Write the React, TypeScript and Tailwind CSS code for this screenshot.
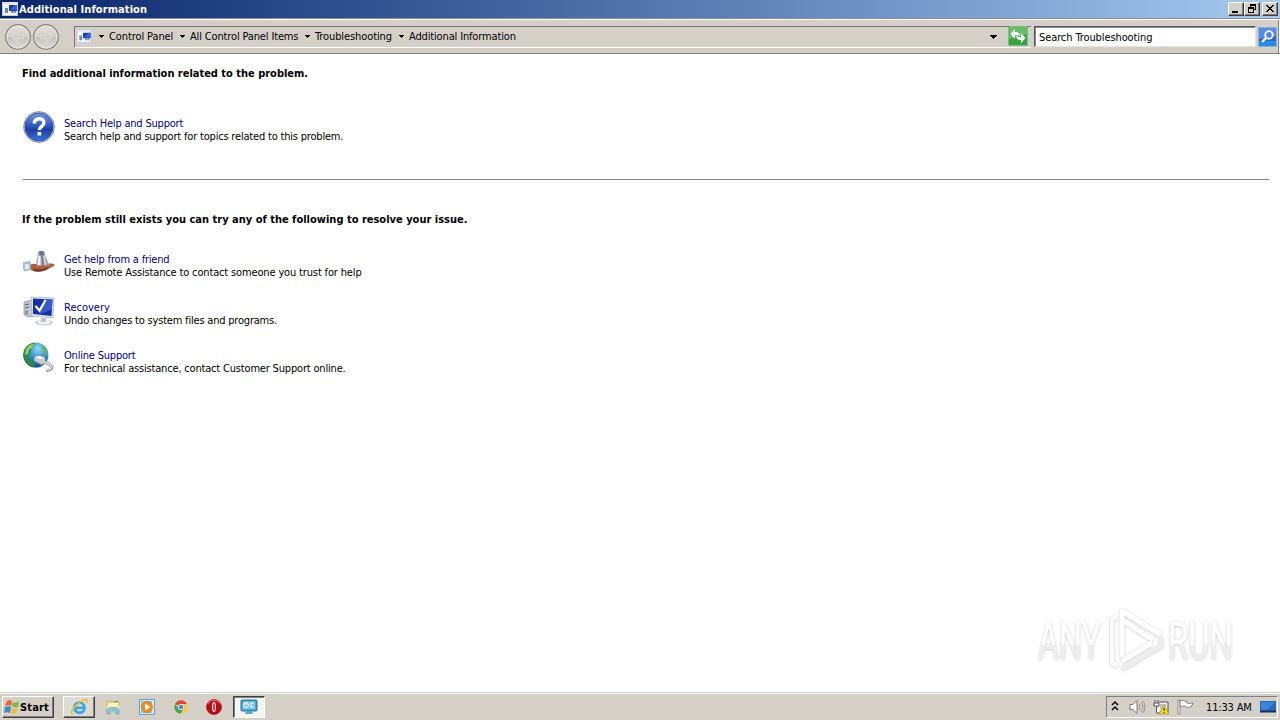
import type { ReactNode } from "react";

const raised = "border border-t-white border-l-white border-r-[#404040] border-b-[#404040] shadow-[inset_-1px_-1px_0_#808080]";

function PanelIcon({ className }: { className: string }) {
  return (
    <svg viewBox="0 0 16 14" className={className}>
      <rect x="0.5" y="0.5" width="15" height="13" fill="#f4f7fc" stroke="#c3cad8" />
      <rect x="0" y="0" width="16" height="2" fill="#dfe4ee" />
      <rect x="7" y="3" width="8" height="6" fill="#1838b0" />
      <path d="M8 8l5-5h2v5z" fill="#3763d8" />
      <rect x="9" y="9" width="5" height="2" fill="#8795b6" />
      <rect x="3" y="6" width="3" height="5" fill="#7187ae" />
      <rect x="4" y="7" width="1" height="1" fill="#43b05c" />
    </svg>
  );
}

function NavButton({ back }: { back?: boolean }) {
  return (
    <svg viewBox="0 0 28 28" className="h-7 w-7 shrink-0">
      <defs>
        <linearGradient id={back ? "nb" : "nf"} x1="0" y1="0" x2="0" y2="1">
          <stop offset="0" stopColor="#e2e0dd" />
          <stop offset="0.48" stopColor="#d3d0cc" />
          <stop offset="0.52" stopColor="#c5c2be" />
          <stop offset="1" stopColor="#e0deda" />
        </linearGradient>
      </defs>
      <circle cx="14" cy="14" r="12.3" fill={back ? "url(#nb)" : "url(#nf)"} stroke="#85827e" strokeWidth="1.2" />
      <circle cx="14" cy="14" r="11" fill="none" stroke="#e9e7e3" strokeWidth="0.9" />
      <path
        d={back ? "M13.5 8.500l-5.500 5.500 5.500 5.500v-4h6v-3h-6z" : "M14.500 8.500l5.500 5.500-5.500 5.500v-4h-6v-3h6z"}
        fill="#d2cfca"
        stroke="#dfdcd8"
        strokeWidth="0.8"
      />
    </svg>
  );
}

function Caret({ className }: { className: string }) {
  return (
    <svg viewBox="0 0 7 4" className={className} shapeRendering="crispEdges">
      <path d="M0 0h7L3.5 4z" fill="#000" />
    </svg>
  );
}

function Crumb({ label, width, tracking }: { label: string; width: string; tracking: string }) {
  return (
    <div className={`flex shrink-0 items-center ${width}`}>
      <Caret className="mr-[5px] h-[3px] w-[5px]" />
      <span className={`whitespace-nowrap ${tracking}`}>{label}</span>
    </div>
  );
}

function HelpIcon() {
  return (
    <svg viewBox="0 0 32 34" className="h-[34px] w-8">
      <defs>
        <linearGradient id="help" x1="0" y1="0" x2="0" y2="1">
          <stop offset="0" stopColor="#7897dd" />
          <stop offset="0.45" stopColor="#3258bd" />
          <stop offset="0.6" stopColor="#1c3ea6" />
          <stop offset="1" stopColor="#3b76dc" />
        </linearGradient>
      </defs>
      <circle cx="16" cy="17" r="15.4" fill="#d3dae8" stroke="#8290ad" strokeWidth="1" />
      <circle cx="16" cy="17" r="14" fill="url(#help)" stroke="#203b8f" strokeWidth="0.8" />
      <path d="M11.3 13.4c0-6.500 9.6-6 9.6-.6 0 3.900-4.600 3.400-4.600 7.500" fill="none" stroke="#fff" strokeWidth="3.500" />
      <rect x="14.4" y="22" width="3.8" height="3.600" rx="0.6" fill="#fff" />
    </svg>
  );
}

function FriendIcon() {
  return (
    <svg viewBox="0 0 32 32" className="h-8 w-8">
      <path d="M7 17c3-2 6-1 9 0 5-1 10-2 15-1 2 1-1 3-4 4-4 3-10 4-15 3l-5-1z" fill="#a85f3e" />
      <path d="M10 21c5 1 12 0 16-2l-3 3c-5 2-9 2-13 1z" fill="#713621" />
      <path d="M13 18c4-1 9-1 14-1" stroke="#d59a79" fill="none" />
      <path d="M0 14.500l7-1 1 8-7 1.500z" fill="#a9c6d5" stroke="#8aa6b5" strokeWidth="0.6" />
      <path d="M2 16h4v5H2z" fill="#d8ebf4" />
      <path d="M14.500 5l1.500-2h5l1 2c-1 3 3 7 3 10-1 3-11 3-12 0 0-3 3-7 1.500-10z" fill="#9fa8b8" />
      <circle cx="18.500" cy="5" r="2.300" fill="#677386" />
      <path d="M15.500 8h2v9h-3z" fill="#f3f6fa" />
      <path d="M19 7l1 11" stroke="#65738b" strokeWidth="1.200" />
      <path d="M21 8l1.500 9" stroke="#dce3ee" strokeWidth="1.200" />
    </svg>
  );
}

function RecoveryIcon() {
  return (
    <svg viewBox="0 0 32 32" className="h-8 w-8">
      <ellipse cx="21" cy="26.500" rx="9" ry="3" fill="#d0d3d8" />
      <ellipse cx="21" cy="26" rx="6.500" ry="2" fill="#f2f3f5" />
      <path d="M1 6l7-2 3 16-6 1-4-2z" fill="#c3c7cd" stroke="#8d949e" strokeWidth="0.7" />
      <path d="M2 9l4-1M2 12l4-1" stroke="#555e6b" />
      <path d="M2 15l3-1v5l-3-1z" fill="#8c949f" />
      <path d="M8 1l23 1-1 20-21-2z" fill="#e1e5ec" stroke="#a8b0bd" strokeWidth="0.7" />
      <path d="M10 2.500l19.500 1-1 16.500-18.500-2z" fill="#1731a4" />
      <path d="M21 3l8.500 .5-.7 10L16 18.500z" fill="#3f62cf" opacity=".85" />
      <path d="M12.500 10l4 4.500L22.500 4" fill="none" stroke="#fff" strokeWidth="2.200" />
      <path d="M18 22h5v4h-5z" fill="#bfc4cc" />
    </svg>
  );
}

function OnlineIcon() {
  return (
    <svg viewBox="0 0 32 32" className="h-8 w-8">
      <defs>
        <radialGradient id="globe" cx=".6" cy=".25" r=".85">
          <stop offset="0" stopColor="#8fdcf5" />
          <stop offset=".5" stopColor="#2d8bd0" />
          <stop offset="1" stopColor="#083b7d" />
        </radialGradient>
      </defs>
      <circle cx="12.800" cy="13" r="12.600" fill="url(#globe)" />
      <path d="M2 7C5 2 9 .5 12 1l-2 4-2 3-1 4-2 1 2 5 5 3-1 4C4 24-1 16 1 10z" fill="#2f8a3d" />
      <path d="M3 7c2-3 4-5 8-5l-2 4-3 2-1 4-3 1z" fill="#8fd066" />
      <path d="M19 3c4 3 6 6 6 11l-3-2-1-4-3-2z" fill="#5bb957" />
      <path d="M11 15l5-2 6 2 1 5-4 3-8-4z" fill="#c7ccd2" stroke="#737d8a" strokeWidth=".8" />
      <path d="M12 15l4-1 5 2-4 1z" fill="#fff" />
      <path d="M21 20c3 1 7 3 8 5.500 0 2-3 2.500-6 3" stroke="#8b949f" strokeWidth="3" fill="none" />
      <path d="M21 20c3 1 7 3 7.500 5 0 2-3 2.500-5.500 3" stroke="#e4e8ec" strokeWidth="1.400" fill="none" />
    </svg>
  );
}

function Item({ icon, title, text, tt, bt }: { icon: ReactNode; title: string; text: string; tt: string; bt: string }) {
  return (
    <div className="flex h-12 shrink-0 items-start">
      <div className="w-[42px] shrink-0">{icon}</div>
      <div className="pt-[9px] leading-[13px]">
        <div className={`whitespace-nowrap text-[#000080] ${tt}`}>{title}</div>
        <div className={`whitespace-nowrap ${bt}`}>{text}</div>
      </div>
    </div>
  );
}

function WindowButton({ children }: { children: ReactNode }) {
  return (
    <div className={`h-[14px] w-4 bg-[#d4d0c8] ${raised}`}>
      <svg viewBox="0 0 14 12" className="h-3 w-[14px]" shapeRendering="crispEdges">{children}</svg>
    </div>
  );
}

function Watermark() {
  return (
    <svg viewBox="0 0 230 80" className="absolute top-[600px] left-[1020px] h-20 w-[230px] overflow-visible">
      <defs>
        <filter id="glow" x="-10%" y="-20%" width="120%" height="140%">
          <feDropShadow dx="0" dy="0.5" stdDeviation="1.800" floodColor="#777" floodOpacity=".42" />
        </filter>
        <linearGradient id="fade" x1="0" y1="0" x2="0" y2="1">
          <stop offset=".54" stopColor="#fff" />
          <stop offset=".57" stopColor="#eeeeee" />
        </linearGradient>
      </defs>
      <g filter="url(#glow)" fill="url(#fade)">
        <text x="18" y="59" textLength="63" lengthAdjust="spacingAndGlyphs" fontFamily="Roboto, sans-serif" fontWeight="400" fontSize="52">ANY</text>
        <text x="148" y="59" textLength="65" lengthAdjust="spacingAndGlyphs" fontFamily="Roboto, sans-serif" fontWeight="400" fontSize="52">RUN</text>
        <g fill="none" strokeLinejoin="round">
          <path d="M97 17l-5 2v44l6 3" stroke="#fafafa" strokeWidth="4" />
          <path d="M102 57V11l39 24M102 20l31 20M102 61l30-18" stroke="#fdfdfd" strokeWidth="4.500" />
          <path d="M102 69l39-23v-8" stroke="#ededed" strokeWidth="4" />
        </g>
      </g>
    </svg>
  );
}

function IeIcon() {
  return (
    <svg viewBox="0 0 18 18" className="h-[18px] w-[18px]">
      <path d="M14.500 11.500c-2 5-10 4-10-2 0-6.500 10-6.500 10 .3H6" fill="none" stroke="#3ca5e3" strokeWidth="2.800" />
      <path d="M3 16c-4 0 1-8 6-11 3-2.500 8-5 8-2.500 0 1-.5 2-1 2.500" fill="none" stroke="#eeb931" strokeWidth="1.500" />
    </svg>
  );
}

function ExplorerIcon() {
  return (
    <svg viewBox="0 0 18 18" className="h-[18px] w-[18px]">
      <path d="M3 3h5l1 1h6v10H2z" fill="#edcd69" stroke="#d3ae50" strokeWidth=".6" />
      <path d="M4 5h10v3H4z" fill="#fff8d7" />
      <path d="M10 3h4v1h-4z" fill="#51ae64" />
      <path d="M2 8h14l-1 6H3z" fill="#f6e39b" />
      <path d="M3 16v-4c0-3 12-3 12 0v4h-3v-3H6v3z" fill="#83c9e8" stroke="#559fbe" strokeWidth=".6" />
    </svg>
  );
}

function PlayerIcon() {
  return (
    <svg viewBox="0 0 16 16" className="h-4 w-4">
      <rect x=".5" y=".5" width="15" height="15" fill="#d1e8f7" stroke="#6ba1c7" />
      <rect x="2" y="2" width="11" height="12" fill="#8bc2e4" />
      <circle cx="8" cy="8" r="5.500" fill="#f58a14" stroke="#dc6e08" strokeWidth=".6" />
      <path d="M6 4.500L11.500 8 6 11.500z" fill="#fff" />
    </svg>
  );
}

function ChromeIcon() {
  return (
    <svg viewBox="0 0 16 16" className="h-[14px] w-[14px]">
      <circle cx="8" cy="8" r="7.500" fill="#f8ca3d" />
      <path d="M8 8L1.300 4.500A7.500 7.500 0 0 1 14.700 4.500H8z" fill="#df4937" />
      <path d="M1.300 4.500A7.500 7.500 0 0 0 7.500 15.500L11 9.500 5 9.500z" fill="#3ca557" />
      <circle cx="8" cy="8" r="3.500" fill="#f5f5f5" />
      <circle cx="8" cy="8" r="2.700" fill="#4587e9" />
    </svg>
  );
}

function OperaIcon() {
  return (
    <svg viewBox="0 0 16 16" className="h-4 w-4">
      <circle cx="8" cy="8" r="7.500" fill="#b80e17" stroke="#8e080e" strokeWidth=".6" />
      <path d="M2 5c2-5 10-5 12 0" fill="none" stroke="#e65559" strokeWidth="1.500" />
      <ellipse cx="8" cy="8" rx="1.900" ry="5" fill="#fff" />
      <ellipse cx="8" cy="8" rx=".9" ry="4" fill="#cc1b24" />
    </svg>
  );
}

function ControlIcon() {
  return (
    <svg viewBox="0 0 18 16" className="h-4 w-[18px]">
      <rect x="1" y="1" width="16" height="11" rx="1" fill="#3e98cb" stroke="#2f789f" />
      <rect x="2.500" y="2.500" width="13" height="8" fill="#77c2e7" />
      <circle cx="6" cy="6" r="2.500" fill="none" stroke="#fff" />
      <path d="M6 6V3M10 4h4M10 6h2M10 8h4" stroke="#fff" strokeWidth="1.200" />
      <path d="M6 12h6l1 3H5z" fill="#59a9d3" />
    </svg>
  );
}

function Tray() {
  return (
    <div className="mt-[3px] flex h-[22px] w-[172px] shrink-0 items-center border border-t-[#808080] border-l-[#808080] border-r-white border-b-white">
      <svg viewBox="0 0 8 10" className="mb-[2px] ml-[4px] h-[10px] w-2">
        <path d="M1 4l3-3 3 3M1 9l3-3 3 3" fill="none" stroke="#000" strokeWidth="1.500" />
      </svg>
      <svg viewBox="0 0 17 16" className="ml-[10px] h-4 w-[17px]">
        <path d="M1 5.500h3l4-4v13l-4-4H1z" fill="#fff" stroke="#7c7c7c" />
        <path d="M10 5q2 3 0 6M12 3q4 5 0 10M14 2q4 6 0 12" fill="none" stroke="#858585" strokeWidth=".8" />
      </svg>
      <svg viewBox="0 0 17 16" className="ml-[7px] h-4 w-[17px]">
        <path d="M6 3h9v10H5" fill="#eee" stroke="#555" />
        <path d="M7 5h6v5H7z" fill="#bfc1c3" />
        <path d="M2 1v3M5 1v3M1 4h5v3H1zM3.500 7v7h4" fill="#fff" stroke="#555" />
        <path d="M11 6l5 9H6z" fill="#ffda24" stroke="#b08810" strokeWidth=".7" />
        <path d="M11 9v3M11 13v1" stroke="#222" />
      </svg>
      <svg viewBox="0 0 17 16" className="ml-[7px] h-4 w-[17px]">
        <path d="M1 1h2v14H1z" fill="#fff" stroke="#777" strokeWidth=".8" />
        <path d="M3 2c3-2 4 1 7 0v2c2 1 3 0 6 0l-2 4c-3 1-5 0-6-1-2 0-3 0-5 1z" fill="#fff" stroke="#666" strokeWidth=".8" />
      </svg>
      <span className="ml-[12px] w-[54px] whitespace-nowrap tracking-[-0.15px]">11:33 AM</span>
      <svg viewBox="0 0 16 14" className="h-[14px] w-4 shrink-0">
        <rect x="0" y="1" width="16" height="10" fill="#2a68bd" />
        <path d="M1 2h14L7 10H1z" fill="#3c84d8" />
        <path d="M0 10.500h16v2H0z" fill="#16345f" />
      </svg>
    </div>
  );
}

export default function App() {
  return (
    <div className="relative flex h-[720px] w-[1280px] flex-col overflow-hidden bg-white font-['DejaVu_Sans_Condensed','DejaVu_Sans',sans-serif] text-[11px] leading-[13px] text-black">
      <header className="flex h-[18px] shrink-0 items-center bg-linear-to-r from-[#0a246a] to-[#a6caf0] text-white">
        <PanelIcon className="ml-[2px] h-[14px] w-4" />
        <span className="ml-px whitespace-nowrap font-bold tracking-[0.08px]">Additional Information</span>
        <div className="mr-[2px] ml-auto flex">
          <WindowButton><path d="M3 8h6v2H3z" /></WindowButton>
          <WindowButton><path d="M5 1h6v6H9V6h1V3H6v1H5zM3 4h6v6H3zM4 6v3h4V6z" fillRule="evenodd" /></WindowButton>
          <div className="w-[2px]" />
          <WindowButton><path d="M3 2h2v1h1v1h2V3h1V2h2v1h-1v1H9v1H8v1h1v1h1v1h1v1H9V8H8V7H6v1H5v1H3V8h1V7h1V6h1V5H5V4H4V3H3z" /></WindowButton>
        </div>
      </header>

      <nav className="flex h-9 shrink-0 items-center border-b border-b-[#808080] bg-[#d4d0c8] shadow-[inset_0_1px_0_#8b8b93,inset_0_2px_0_#fff,inset_-1px_0_0_#fff,inset_-2px_0_0_#808080]">
        <div className="ml-[4px] flex pt-[2px]">
          <NavButton back />
          <NavButton />
        </div>
        <div className="mt-[2px] ml-[14px] flex h-[22px] w-[957px] shrink-0 items-center border-t border-b border-l border-t-[#77777b] border-b-white border-l-[#77777b] pb-px">
          <PanelIcon className="ml-px h-[13px] w-4" />
          <div className="ml-[7px] flex">
            <Crumb label="Control Panel" width="w-[81px]" tracking="tracking-[-0.1px]" />
            <Crumb label="All Control Panel Items" width="w-[125px]" tracking="tracking-[-0.15px]" />
            <Crumb label="Troubleshooting" width="w-[94px]" tracking="tracking-[-0.1px]" />
            <Crumb label="Additional Information" width="w-[125px]" tracking="tracking-[-0.15px]" />
          </div>
          <Caret className="mt-px mr-[11px] ml-auto h-[4px] w-[7px]" />
          <svg viewBox="0 0 20 20" className="mr-[3px] h-5 w-5">
            <rect x=".5" y=".5" width="19" height="19" rx="1" fill="#35a442" stroke="#83ba83" />
            <path d="M1 1h18v7L1 13z" fill="#66bf65" />
            <path d="M2.500 8L7 3v3c3 0 5 1 5 5-1-2-2.500-2-5-2v4zM17.500 12L13 17v-3c-3 0-5-1-5-5 1 2 2.500 2 5 2V7z" fill="#fff" />
          </svg>
        </div>
        <div className="mt-[2px] ml-[3px] flex h-[21px] w-[222px] shrink-0 items-center border border-t-[#55555a] border-r-[#e4e2de] border-b-[#e4e2de] border-l-[#55555a] bg-white shadow-[inset_1px_1px_0_#8a8a8a]">
          <span className="mt-[2px] ml-[4px] whitespace-nowrap tracking-[-0.1px]">Search Troubleshooting</span>
        </div>
        <svg viewBox="0 0 19 20" className="mt-[2px] ml-[2px] h-5 w-[19px]">
          <rect x=".5" y=".5" width="18" height="19" fill="#2764cb" stroke="#8dafdf" />
          <path d="M1 1h17v8L1 12z" fill="#588ce0" />
          <path d="M1 14h17v5H1z" fill="#258ee0" />
          <circle cx="11" cy="8" r="3.800" fill="#5688de" stroke="#fff" strokeWidth="1.800" />
          <path d="M8 11L4 15" stroke="#fff" strokeWidth="2.400" />
        </svg>
      </nav>

      <main className="flex min-h-0 flex-1 flex-col pr-[11px] pl-[22px]">
        <h1 className="mt-[13px] h-[13px] shrink-0 whitespace-nowrap font-bold tracking-[-0.015px]">Find additional information related to the problem.</h1>
        <div className="mt-[29px] ml-px flex h-[34px] shrink-0">
          <div className="mt-px w-[41px]"><HelpIcon /></div>
          <div className="pt-[8px]">
            <div className="whitespace-nowrap tracking-[-0.2px] text-[#000080]">Search Help and Support</div>
            <div className="whitespace-nowrap tracking-[-0.19px]">Search help and support for topics related to this problem.</div>
          </div>
        </div>
        <hr className="mt-[36px] ml-px h-px shrink-0 border-0 bg-[#808080]" />
        <h2 className="mt-[33px] h-[13px] shrink-0 whitespace-nowrap font-bold">If the problem still exists you can try any of the following to resolve your issue.</h2>
        <div className="mt-[18px] flex flex-col">
          <Item icon={<div className="mt-[4px] ml-px"><FriendIcon /></div>} title="Get help from a friend" text="Use Remote Assistance to contact someone you trust for help" tt="tracking-[-0.19px]" bt="tracking-[-0.15px]" />
          <Item icon={<div className="mt-[4px] ml-px"><RecoveryIcon /></div>} title="Recovery" text="Undo changes to system files and programs." tt="tracking-[0px]" bt="tracking-[-0.2px]" />
          <Item icon={<div className="mt-[2px] ml-px"><OnlineIcon /></div>} title="Online Support" text="For technical assistance, contact Customer Support online." tt="tracking-[-0.2px]" bt="tracking-[-0.18px]" />
        </div>
      </main>

      <footer className="flex h-7 shrink-0 border-t border-t-[#d4d0c8] bg-[#d4d0c8] shadow-[inset_0_1px_0_#fff]">
        <div className={`mt-[3px] ml-[2px] flex h-[22px] w-[52px] items-center ${raised}`}>
          <svg viewBox="0 0 16 16" className="ml-px h-4 w-4">
            <path d="M3 2c2-2 4 0 5 0L7 7C5 6 4 6 1 7z" fill="#ea6838" />
            <path d="M9 3c2 1 4 1 6-1l-1 6c-2 1-4 0-6-1z" fill="#7bbb43" />
            <path d="M1 8c2-1 4-1 6 0l-1 6c-2-1-4-1-6 0z" fill="#4689ce" />
            <path d="M8 9c2 1 4 1 6 0l-2 5c-2 1-4 1-5 0z" fill="#f0bd36" />
          </svg>
          <span className="font-bold tracking-[0.15px]">Start</span>
        </div>
        <div className={`mt-[3px] ml-[9px] flex h-[22px] w-8 items-center justify-center bg-[#dedbd5] ${raised}`}><IeIcon /></div>
        <div className="ml-[9px] flex items-center">
          <ExplorerIcon />
          <div className="ml-[17px]"><PlayerIcon /></div>
          <div className="ml-[19px]"><ChromeIcon /></div>
          <div className="ml-[18px]"><OperaIcon /></div>
        </div>
        <div className="mt-[3px] ml-[11px] flex h-[22px] w-8 items-center justify-center border border-t-[#404040] border-r-white border-b-white border-l-[#404040] bg-[#f6f4f0] shadow-[inset_1px_1px_0_#808080]"><ControlIcon /></div>
        <div className="mr-[2px] ml-auto"><Tray /></div>
      </footer>
      <Watermark />
    </div>
  );
}
